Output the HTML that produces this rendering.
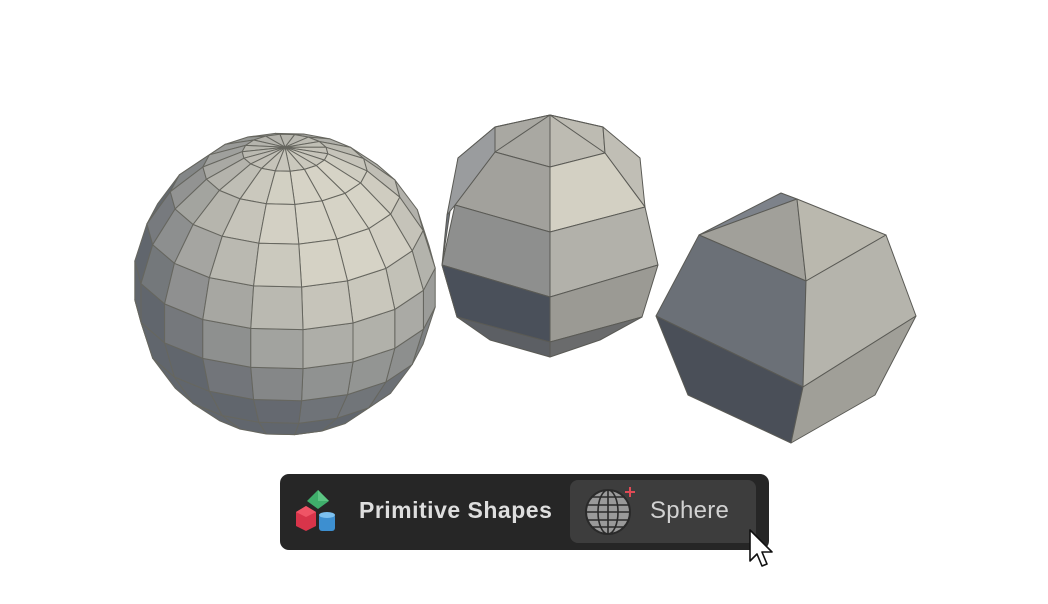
<!DOCTYPE html>
<html><head><meta charset="utf-8"><style>
html,body{margin:0;padding:0;background:#fff;width:1048px;height:604px;overflow:hidden;font-family:"Liberation Sans",sans-serif}
#bar{position:absolute;left:280px;top:474px;width:489px;height:76px;background:#262626;border-radius:9px}
#btn{position:absolute;left:290px;top:6px;width:186px;height:63px;background:#3d3d3d;border-radius:8px}
.t1{position:absolute;left:79px;top:23px;font-size:23px;font-weight:bold;color:#dedede;letter-spacing:0.5px}
.t2{position:absolute;left:80px;top:17px;font-size:24px;color:#d2d2d2;letter-spacing:0.3px}
svg{position:absolute;left:0;top:0}
</style></head><body>
<svg id="s" width="1048" height="470" viewBox="0 0 1048 470">
<g id="sph" stroke="#66665f" stroke-width="1" stroke-linejoin="round"></g>
<g stroke="#5a5a55" stroke-width="1" stroke-linejoin="round">
<polygon points="458,158 495,127 495,152 455,205 447,215 442,265 457,317 550,357 550,342 457,317 442,265" fill="#6c717a"/>
<polygon points="495,127 550,115 550,167 495,152" fill="#a9a8a2"/>
<polygon points="550,115 603,127 605,153 550,167" fill="#bdbbb2"/>
<polygon points="603,127 640,158 645,207 605,153" fill="#c0beb5"/>
<polygon points="495,152 550,167 550,232 455,205" fill="#a2a19c"/>
<polygon points="550,167 605,153 645,207 550,232" fill="#d3d0c3"/>
<polygon points="458,158 495,127 495,152 455,205 447,215" fill="#9a9c9e"/>
<polygon points="455,205 550,232 550,297 442,265" fill="#8e8f8e"/>
<polygon points="550,232 645,207 658,265 550,297" fill="#b2b1aa"/>
<polygon points="442,265 550,297 550,342 457,317" fill="#4a505a"/>
<polygon points="550,297 658,265 642,317 550,342" fill="#9b9a94"/>
<polygon points="457,317 550,342 550,357 490,340" fill="#5c5f64"/>
<polygon points="550,342 642,317 600,340 550,357" fill="#6a6b6c"/>
<polyline points="495,127 550,115 603,127" fill="none"/>
<line x1="550" y1="115" x2="495" y2="152"/><line x1="550" y1="115" x2="605" y2="153"/>
<polygon points="781,193 797,199 699,235" fill="#7d828a"/>
<polygon points="699,235 797,199 806,281" fill="#a1a09a"/>
<polygon points="797,199 886,235 806,281" fill="#bab8ae"/>
<polygon points="699,235 806,281 803,387 656,316" fill="#6b7077"/>
<polygon points="806,281 886,235 916,316 803,387" fill="#b5b4ac"/>
<polygon points="656,316 803,387 791,443 688,395" fill="#4a4f58"/>
<polygon points="803,387 916,316 875,395 791,443" fill="#a09f98"/>
</g>
</svg>
<script>
(function(){
var g=document.getElementById('sph');var cx=285,cy=284,r=152;
var ca=0.9,sa=Math.sqrt(1-ca*ca);
var L=[0.35,0.45,0.82];var n=Math.hypot(L[0],L[1],L[2]);L=L.map(function(v){return v/n});
function V(th,ph){var x=Math.sin(th)*Math.sin(ph),y=Math.cos(th),z=Math.sin(th)*Math.cos(ph);
 return [x, y*ca - z*sa, y*sa + z*ca];}
var NL=11,NM=18;var faces=[];
for(var i=0;i<NL;i++)for(var j=0;j<NM;j++){
 var t0=Math.PI*i/NL,t1=Math.PI*(i+1)/NL,p0=2*Math.PI*j/NM+0.12,p1=2*Math.PI*(j+1)/NM+0.12;
 var a=V(t0,p0),b=V(t0,p1),c=V(t1,p1),d=V(t1,p0);
 var m=V((t0+t1)/2,(p0+p1)/2);
 if(m[2]<=-0.05)continue;
 var dd=Math.max(0,m[0]*L[0]+m[1]*L[1]+m[2]*L[2]);
 var s=Math.min(1,0.2+0.85*Math.pow(dd,1.0));
 var D=[68,75,87],W=[214,211,198];
 var col='rgb('+D.map(function(v,k){return Math.round(v+(W[k]-v)*s)}).join(',')+')';
 var pts=[a,b,c,d].map(function(q){return (cx+q[0]*r).toFixed(1)+','+(cy-q[1]*r).toFixed(1)}).join(' ');
 faces.push({z:m[2],s:'<polygon points="'+pts+'" fill="'+col+'"/>'});
}
faces.sort(function(x,y){return x.z-y.z});
g.innerHTML=faces.map(function(f){return f.s}).join('');
})();
</script>
<div id="bar">
 <svg width="50" height="60" style="left:12px;top:10px" viewBox="0 0 50 60">
  <polygon points="26,6 37,17 26,25 15,17" fill="#3fae6b"/><polygon points="26,6 37,17 26,17" fill="#5cc583"/>
  <polygon points="4,28 14,22 24,28 24,42 14,47 4,42" fill="#d8344a"/><polygon points="4,28 14,22 24,28 14,33" fill="#ef5466"/>
  <rect x="27" y="30" width="16" height="17" rx="3" fill="#3d8fd0"/><ellipse cx="35" cy="31" rx="8" ry="3" fill="#7cc0ef"/>
 </svg>
 <div class="t1">Primitive Shapes</div>
 <div id="btn">
  <svg width="70" height="63" viewBox="0 0 70 63">
   <circle cx="38" cy="32" r="22" fill="#9a9a9a" stroke="#2a2a2a" stroke-width="2"/>
   <g fill="none" stroke="#2a2a2a" stroke-width="1.6"><ellipse cx="38" cy="32" rx="10" ry="22"/><line x1="38" y1="10" x2="38" y2="54"/>
   <line x1="17" y1="25" x2="59" y2="25"/><line x1="16" y1="32" x2="60" y2="32"/><line x1="17" y1="40" x2="59" y2="40"/><line x1="21" y1="47" x2="55" y2="47"/><line x1="21" y1="17" x2="55" y2="17"/></g>
   <g stroke="#e04a55" stroke-width="2"><line x1="60" y1="7" x2="60" y2="17"/><line x1="55" y1="12" x2="65" y2="12"/></g>
  </svg>
  <div class="t2">Sphere</div>
 </div>
</div>
<svg width="30" height="45" style="left:746px;top:527px" viewBox="0 0 30 45">
 <path d="M4,3 L4,34 L11,27 L16,39 L21,37 L16,25 L26,25 Z" fill="#fff" stroke="#111" stroke-width="1.6" stroke-linejoin="round"/>
</svg>
</body></html>
